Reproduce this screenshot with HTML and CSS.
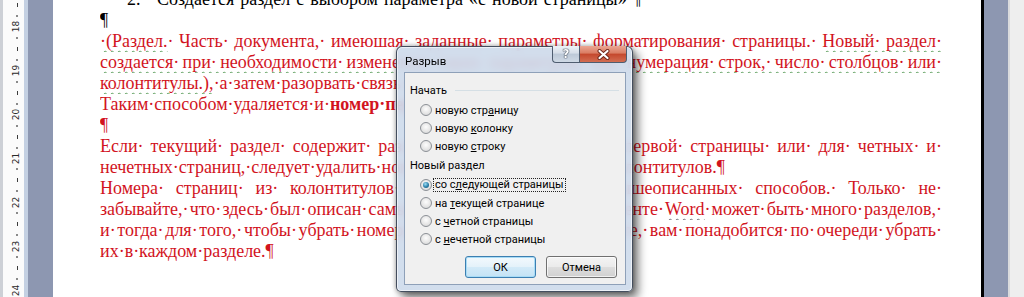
FILE: index.html
```html
<!DOCTYPE html>
<html lang="ru">
<head>
<meta charset="utf-8">
<title>Разрыв</title>
<link rel="stylesheet" href="styles.css">
</head>
<body>
<div class="app">
  <div class="ruler">
    <div class="ticks">
      <div class="c"><b class="dot"></b></div>
      <div class="c"><b class="dash"></b></div>
      <div class="c"><b class="dot"></b></div>
      <div class="c"><span class="n">18</span></div>
      <div class="c"><b class="dot"></b></div>
      <div class="c"><b class="dash"></b></div>
      <div class="c"><b class="dot"></b></div>
      <div class="c"><span class="n">19</span></div>
      <div class="c"><b class="dot"></b></div>
      <div class="c"><b class="dash"></b></div>
      <div class="c"><b class="dot"></b></div>
      <div class="c"><span class="n">20</span></div>
      <div class="c"><b class="dot"></b></div>
      <div class="c"><b class="dash"></b></div>
      <div class="c"><b class="dot"></b></div>
      <div class="c"><span class="n">21</span></div>
      <div class="c"><b class="dot"></b></div>
      <div class="c"><b class="dash"></b></div>
      <div class="c"><b class="dot"></b></div>
      <div class="c"><span class="n">22</span></div>
      <div class="c"><b class="dot"></b></div>
      <div class="c"><b class="dash"></b></div>
      <div class="c"><b class="dot"></b></div>
      <div class="c"><span class="n">23</span></div>
      <div class="c"><b class="dot"></b></div>
      <div class="c"><b class="dash"></b></div>
      <div class="c"><b class="dot"></b></div>
      <div class="c"><span class="n">24</span></div>
      <div class="c"><b class="dot"></b></div>
    </div>
  </div>
  <div class="gutter-l"></div>
  <div class="page">
    <div class="doc">
      <div class="ln blk li"><span class="num">2.</span>Создается· раздел· с· выбором· параметра· «с· новой· страницы»· ¶</div>
      <div class="ln blk">¶</div>
      <div class="ln j"><span class="g">·(Раздел.</span>· Часть· документа,· имеюшая· заданные· параметры· форматирования· страницы.· <span class="g">Новый· раздел·</span></div>
      <div class="ln j"><span class="g">создается· при· необходимости· изменения· таких· параметров,· как· нумерация· строк,· число· столбцов· или·</span></div>
      <div class="ln"><span class="g">колонтитулы.),</span>· а· затем· разорвать· связь· между· разделами.¶</div>
      <div class="ln">Таким· способом· удаляется· и· <b>номер· первой· страницы.</b>¶</div>
      <div class="ln">¶</div>
      <div class="ln j">Если· текущий· раздел· содержит· различные· колонтитулы· для· первой· страницы· или· для· четных· и·</div>
      <div class="ln">нечетных· страниц,· следует· удалить· номера· страниц· из· всех· его·· колонтитулов.¶</div>
      <div class="ln j">Номера· страниц· из· колонтитулов· удаляются· одним· из· вышеописанных· способов.· Только· не·</div>
      <div class="ln j">забывайте,· что· здесь· был· описан· самый· простой· случай.· В· документе· <span class="sq">Word</span>· может· быть· много· разделов,·</div>
      <div class="ln j">и· тогда· для· того,· чтобы· убрать· номера· страниц· во· всем· документе,· вам· понадобится· по· очереди· убрать·</div>
      <div class="ln">их· в· каждом· разделе.¶</div>
    </div>

    <div class="dialog">
      <div class="titlebar">
        <span class="title">Разрыв</span>
        <div class="capbtns">
          <span class="help">?</span>
          <span class="close">
            <svg width="13" height="11" viewBox="0 0 13 11">
              <path d="M2.5 2 L10.5 9 M10.5 2 L2.5 9" stroke="#6b2418" stroke-width="4" stroke-linecap="round"/>
              <path d="M2.5 2 L10.5 9 M10.5 2 L2.5 9" stroke="#ffffff" stroke-width="2.2" stroke-linecap="round"/>
            </svg>
          </span>
        </div>
      </div>
      <div class="client">
        <div class="grp"><span>Начать</span><span class="rule"></span></div>
        <div class="opts">
          <div class="opt"><span class="radio"></span><span>новую стр<u>а</u>ницу</span></div>
          <div class="opt"><span class="radio"></span><span>новую <u>к</u>олонку</span></div>
          <div class="opt"><span class="radio"></span><span>новую <u>с</u>троку</span></div>
        </div>
        <div class="grp grp2"><span>Новый раздел</span></div>
        <div class="opts">
          <div class="opt"><span class="radio on"></span><span class="focus">со с<u>л</u>едующей страницы</span></div>
          <div class="opt"><span class="radio"></span><span>на <u>т</u>екущей странице</span></div>
          <div class="opt"><span class="radio"></span><span>с <u>ч</u>етной страницы</span></div>
          <div class="opt"><span class="radio"></span><span>с <u>н</u>ечетной страницы</span></div>
        </div>
        <div class="btns">
          <span class="btn def">ОК</span>
          <span class="btn">Отмена</span>
        </div>
      </div>
    </div>
  </div>
  <div class="gutter-r"></div>
  <div class="scroll"></div>
</div>
</body>
</html>
```

FILE: styles.css
```css
html, body {
  margin: 0;
  padding: 0;
}
body {
  width: 1024px;
  height: 297px;
  overflow: hidden;
  background: #8d97b1;
}
.app {
  display: flex;
  height: 297px;
}

/* vertical ruler */
.ruler {
  width: 28px;
  flex: none;
  box-sizing: border-box;
  border-left: 3px solid #cdd0d6;
  border-right: 4px solid #c4d0e2;
  background: #fbfbfb;
  padding-left: 7px;
  overflow: hidden;
}
.ticks {
  margin-top: -11.5px;
}
.c {
  height: 10.98px;
  display: flex;
  align-items: center;
  justify-content: center;
}
.dot {
  width: 2px;
  height: 2px;
  background: #8a8a8a;
}
.dash {
  width: 1px;
  height: 4px;
  background: #3c3c3c;
}
.n {
  display: block;
  font: 9px/1 "DejaVu Sans", sans-serif;
  color: #2a2a2a;
  transform: rotate(-90deg);
}

.gutter-l {
  width: 25px;
  flex: none;
  background: #8d97b1;
}
.gutter-r {
  width: 24px;
  flex: none;
  background: #8d97b1;
}
.scroll {
  width: 16px;
  flex: none;
  box-sizing: border-box;
  border-left: 2px solid #dadbdd;
  background: #eeeeee;
}

/* page */
.page {
  width: 928px;
  flex: none;
  background: #ffffff;
  border-right: 3px solid #000000;
  position: relative;
  overflow: hidden;
}
.doc {
  margin: -11px 0 0 47px;
  width: 842px;
  font: 18px/21px "Liberation Serif", "Times New Roman", serif;
  color: #d2141e;
  word-spacing: -0.25em;
}
.ln {
  height: 21px;
  overflow: hidden;
}
.j {
  text-align: justify;
  text-align-last: justify;
}
.blk {
  color: #000000;
}
.li {
  padding-left: 27px;
}
.num {
  display: inline-block;
  width: 30px;
  word-spacing: 0;
}
.g {
  text-decoration: underline wavy #5c9e5c;
  text-decoration-thickness: 1px;
  text-underline-offset: 3px;
  text-decoration-skip-ink: none;
}
.sq {
  text-decoration: underline wavy #6f6f7a;
  text-decoration-thickness: 1px;
  text-underline-offset: 3px;
  text-decoration-skip-ink: none;
}

/* dialog */
.dialog {
  position: absolute;
  left: 343px;
  top: 46px;
  width: 237px;
  height: 246px;
  box-sizing: border-box;
  border: 1px solid rgba(20, 30, 45, 0.75);
  border-radius: 6px 6px 5px 5px;
  padding: 0 6px 6px 7px;
  background: rgba(204, 218, 235, 0.88);
  backdrop-filter: blur(4px);
  box-shadow: 5px 6px 10px rgba(0, 0, 0, 0.55), 0 0 5px rgba(0, 0, 0, 0.35), inset 0 0 0 1px rgba(255, 255, 255, 0.6);
  display: flex;
  flex-direction: column;
  font: 11px Roboto, "Noto Sans", sans-serif;
  color: #000000;
}
.titlebar {
  height: 25px;
  display: flex;
  justify-content: space-between;
  align-items: flex-start;
}
.title {
  padding: 6px 0 0 1px;
  line-height: 16px;
  font-size: 11.5px;
}
.capbtns {
  display: flex;
  margin-right: -1px;
  margin-top: -1px;
}
.help, .close {
  height: 17px;
  box-sizing: border-box;
  border: 1px solid #4f5d70;
  border-top: none;
  display: flex;
  align-items: center;
  justify-content: center;
}
.help {
  width: 27px;
  border-radius: 0 0 0 4px;
  border-right: none;
  background: linear-gradient(#eef2f7, #d5dde8 45%, #bcc8d7 50%, #cfd9e5);
  font: bold 12px/1 "DejaVu Sans", sans-serif;
  color: #ffffff;
  text-shadow: 0 0 1px #2e3b4c, 0 0 1px #2e3b4c, 0 0 1px #2e3b4c;
}
.close {
  width: 48px;
  border-radius: 0 0 4px 0;
  background: linear-gradient(#eba592, #d97c62 45%, #c4472c 50%, #d26d52);
}
.client {
  flex: 1;
  background: #f0f0f0;
  border: 1px solid #8ea0b8;
  padding-top: 8px;
}
.grp {
  display: flex;
  align-items: center;
  height: 18px;
  padding-left: 5px;
}
.grp2 {
  margin-top: 1px;
}
.rule {
  flex: 1;
  height: 1px;
  background: #d5dfe5;
  margin: 0 6px 0 8px;
}
.opts {
  margin-top: 2px;
}
.opt {
  display: flex;
  align-items: center;
  height: 18px;
  padding-left: 15px;
  gap: 3px;
}
.radio {
  width: 12px;
  height: 12px;
  box-sizing: border-box;
  border-radius: 50%;
  border: 1px solid #8c9096;
  background: radial-gradient(circle at 50% 40%, #fdfdfd 0%, #e6e6e6 55%, #cfd1d3 100%);
  display: flex;
  align-items: center;
  justify-content: center;
}
.radio.on::after {
  content: "";
  width: 6px;
  height: 6px;
  border-radius: 50%;
  background: radial-gradient(circle at 40% 35%, #9fe0f6 0%, #2a7ea8 55%, #174f6c 100%);
}
.focus {
  margin-left: -2px;
  padding: 0 1px;
  border: 1px dotted #222222;
  line-height: 12px;
}
u {
  text-decoration-thickness: 1px;
  text-underline-offset: 1px;
}
.btns {
  display: flex;
  justify-content: flex-end;
  gap: 10px;
  padding-right: 8px;
  margin-top: 8px;
}
.btn {
  width: 71px;
  height: 22px;
  box-sizing: border-box;
  border: 1px solid #707070;
  border-radius: 3px;
  background: linear-gradient(#f4f4f4, #ebebeb 48%, #dddddd 52%, #d0d0d0);
  box-shadow: inset 0 0 0 1px rgba(255, 255, 255, 0.7);
  display: flex;
  align-items: center;
  justify-content: center;
}
.btn.def {
  border-color: #3c7fb1;
  background: linear-gradient(#f3f9fd, #e4f2fa 48%, #d2eaf8 52%, #c4e3f5);
  box-shadow: inset 0 0 0 1px #a8dcf6;
}
```
